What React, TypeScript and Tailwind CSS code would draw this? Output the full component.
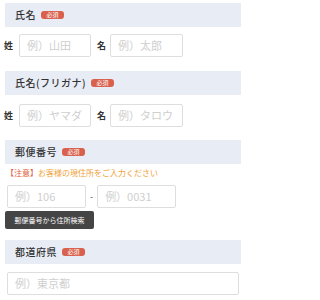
import React from "react";

const font = { fontFamily: '"Noto Sans CJK JP", "Noto Sans", sans-serif' };

function Header({ title, className = "" }: { title: string; className?: string }) {
  return (
    <div className={`mx-[5px] h-[24px] bg-[#e8ecf5] flex items-center pl-[10px] ${className}`}>
      <span className="text-[10px] leading-none font-medium text-[#333] tracking-[0.5px]">{title}</span>
      <span className="ml-[5px] h-[8px] w-[23px] rounded-[3px] bg-[#d8604c] text-white text-[6px] leading-[8px] flex items-center justify-center">必須</span>
    </div>
  );
}

function Input({ ph, className = "" }: { ph: string; className?: string }) {
  return (
    <div className={`h-[23px] border border-[#dedede] rounded-[2px] bg-white flex items-center pl-[7px] text-[11px] text-[#cfcfcf] ${className}`}>
      {ph}
    </div>
  );
}

export default function App() {
  return (
    <div className="w-[246px] h-[300px] bg-white overflow-hidden" style={font}>
      <div className="h-[3px]" />
      <Header title="氏名" />
      <div className="mt-[7px] flex items-center">
        <span className="ml-[4px] w-[15px] text-[9px] font-bold text-[#333]">姓</span>
        <Input ph="例）山田" className="w-[72px]" />
        <span className="ml-[6px] w-[13px] text-[9px] font-bold text-[#333]">名</span>
        <Input ph="例）太郎" className="w-[73px]" />
      </div>
      <Header title="氏名(フリガナ)" className="mt-[14px]" />
      <div className="mt-[9px] flex items-center">
        <span className="ml-[4px] w-[15px] text-[9px] font-bold text-[#333]">姓</span>
        <Input ph="例）ヤマダ" className="w-[72px]" />
        <span className="ml-[6px] w-[13px] text-[9px] font-bold text-[#333]">名</span>
        <Input ph="例）タロウ" className="w-[73px]" />
      </div>
      <Header title="郵便番号" className="mt-[13px]" />
      <div className="mt-[4px] ml-[6px] text-[8px] leading-[10px] text-[#f0a23a]">
        <span className="text-[#e0603c]">【注意】</span>お客様の現住所をご入力ください
      </div>
      <div className="mt-[7px] flex items-center">
        <Input ph="例）106" className="ml-[7px] w-[79px]" />
        <span className="mx-[4px] text-[9px] text-[#555]">-</span>
        <Input ph="例）0031" className="w-[79px]" />
      </div>
      <div className="mt-[3px] ml-[5px] w-[89px] h-[18px] rounded-[2px] bg-[#454545] text-white text-[7px] flex items-center justify-center">
        郵便番号から住所検索
      </div>
      <Header title="都道府県" className="mt-[11px]" />
      <div className="mt-[8px] mx-[7px]">
        <Input ph="例）東京都" className="w-full" />
      </div>
    </div>
  );
}
